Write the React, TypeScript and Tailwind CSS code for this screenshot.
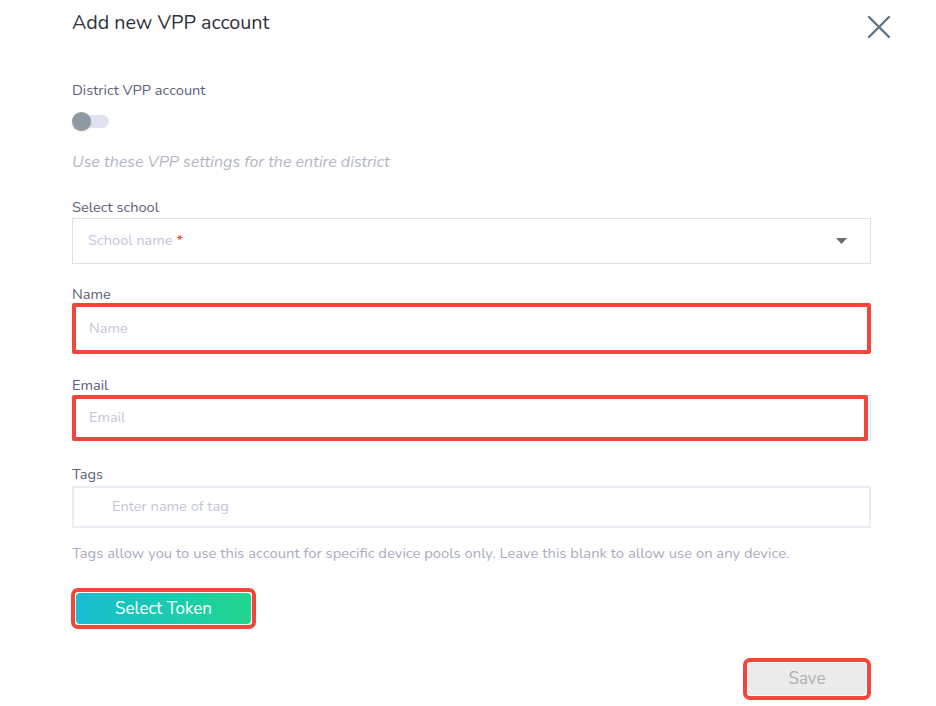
import React from 'react';

const font = { fontFamily: 'Nunito, Lato, "Open Sans", sans-serif' };

const Label: React.FC<{ children: React.ReactNode; className?: string }> = ({ children, className = '' }) => (
  <div className={`text-[14.6px] leading-[18px] text-[#5b6078] ${className}`}>{children}</div>
);

const App: React.FC = () => {
  return (
    <div className="min-h-[706px] w-[936px] bg-white" style={font}>
      <div className="ml-[72px] w-[799px] pt-[10px]">
        {/* Header */}
        <div className="flex items-start justify-between">
          <h1 className="text-[19.7px] leading-[26px] text-[#2f3140]">Add new VPP account</h1>
          <button className="-mr-[20px] mt-[5px] text-[#617585]" aria-label="Close">
            <svg width="24" height="24" viewBox="0 0 24 24" fill="none" stroke="currentColor" strokeWidth="2.4" strokeLinecap="round">
              <path d="M2 2 L22 22 M22 2 L2 22" />
            </svg>
          </button>
        </div>

        {/* District toggle */}
        <Label className="mt-[42px]">District VPP account</Label>
        <div className="relative mt-[12px] h-[20px] w-[38px]">
          <div className="absolute left-[8px] top-[4px] h-[13px] w-[29px] rounded-full bg-[#dfe3ef]" />
          <div className="absolute left-0 top-[1px] h-[19px] w-[19px] rounded-full bg-[#8f99a3] shadow-sm" />
        </div>
        <p className="mt-[20px] text-[16px] italic leading-[22px] text-[#b3b5c4]">
          Use these VPP settings for the entire district
        </p>

        {/* Select school */}
        <Label className="mt-[25px]">Select school</Label>
        <div className="mt-[2px] flex h-[46px] items-center justify-between border border-[#dfe0ea] pl-[15px] pr-[23px]">
          <span className="text-[14.6px] text-[#c3c6d8]">
            School name <span className="text-[#e0382c]">*</span>
          </span>
          <svg width="11" height="6" viewBox="0 0 11 6" className="text-[#6b6b6b]">
            <path d="M0 0 H11 L5.5 6 Z" fill="currentColor" />
          </svg>
        </div>

        {/* Name */}
        <Label className="mt-[21px]">Name</Label>
        <div className="flex h-[51px] items-center rounded-[2px] border-4 border-[#f2463a] pl-[13px]">
          <span className="text-[14.6px] text-[#c3c6d8]">Name</span>
        </div>

        {/* Email */}
        <Label className="mt-[22px]">Email</Label>
        <div className="relative mt-px h-[46px] border border-[#e6e8f0]">
          <div className="absolute -left-px -top-px bottom-[-1px] right-[2px] rounded-[2px] border-4 border-[#f2463a]" />
          <div className="flex h-full items-center pl-[16px]">
            <span className="text-[14.6px] text-[#c3c6d8]">Email</span>
          </div>
        </div>

        {/* Tags */}
        <Label className="mt-[24px]">Tags</Label>
        <div className="mt-[3px] flex h-[42px] items-center border-2 border-[#eaeef4] pl-[38px]">
          <span className="text-[14.6px] text-[#c3c6d8]">Enter name of tag</span>
        </div>
        <p className="mt-[15px] text-[14.8px] leading-[20px] text-[#a9abc0]">
          Tags allow you to use this account for specific device pools only. Leave this blank to allow use on any device.
        </p>

        {/* Select Token */}
        <div className="-ml-px mt-[25px] w-[185px] rounded-[7px] border-4 border-[#f2463a] p-px">
          <button className="h-[31px] w-full rounded-[4px] bg-gradient-to-r from-[#1bbcd2] to-[#23d78c] text-[17px] text-white">
            Select Token
          </button>
        </div>

        {/* Save */}
        <div className="mt-[29px] flex justify-end">
          <div className="w-[128px] rounded-[7px] border-4 border-[#f2463a] p-px">
            <button className="h-[32px] w-full rounded-[4px] bg-[#ebebeb] text-[17px] text-[#b0b0b0]">
              Save
            </button>
          </div>
        </div>
      </div>
    </div>
  );
};

export default App;
